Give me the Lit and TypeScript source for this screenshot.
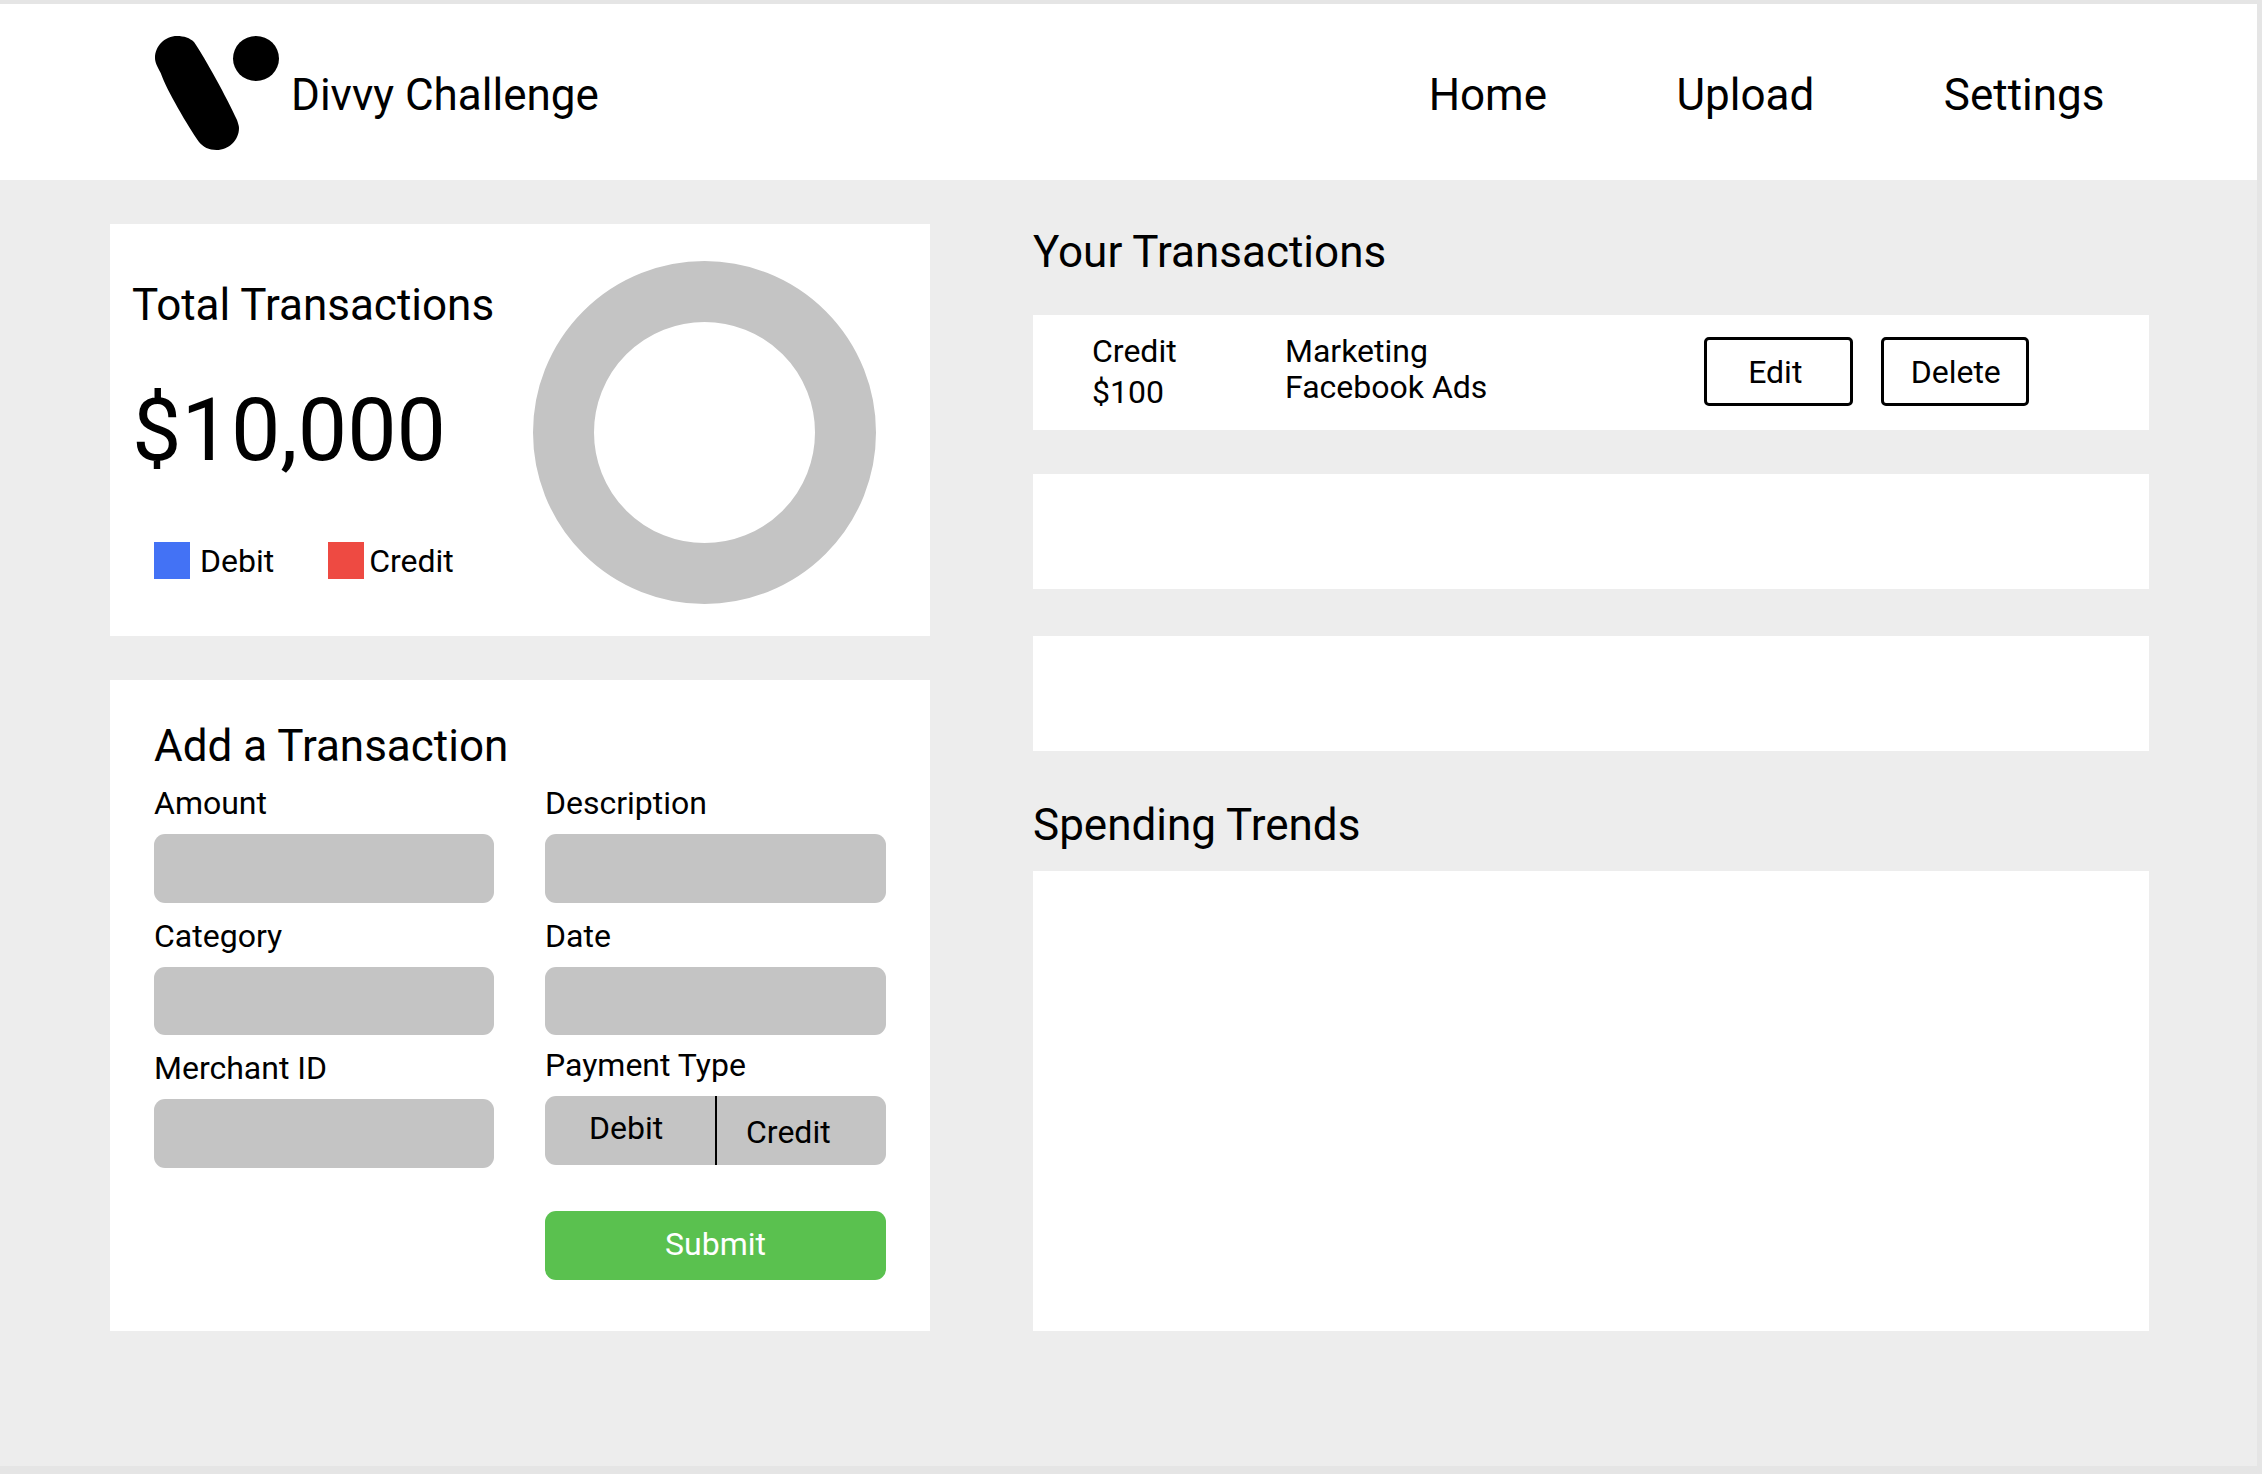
import { css, html, LitElement } from "lit";
import { customElement } from "lit/decorators.js";

@customElement("app-root")
export class AppRoot extends LitElement {
  static styles = css`
    :host {
      display: block;
      width: 2262px;
      height: 1474px;
      background: #e5e5e5;
      font-family: Roboto, "Liberation Sans", sans-serif;
      color: #000;
      overflow: hidden;
    }

    .frame {
      width: 2257px;
      height: 1462px;
      margin-top: 4px;
      background: #ededed;
    }

    /* header */
    .header {
      height: 176px;
      background: #fff;
      display: flex;
      align-items: flex-start;
      box-sizing: border-box;
      padding-left: 155px;
    }
    .logo {
      display: block;
      width: 124px;
      height: 114px;
      margin-top: 32px;
    }
    .brand {
      font-size: 44px;
      line-height: 54px;
      margin: 64px 0 0 12px;
    }
    .nav {
      display: flex;
      gap: 129.5px;
      margin: 64px 0 0 auto;
      padding-right: 152.5px;
      font-size: 44px;
      line-height: 54px;
    }

    /* main */
    .main {
      display: grid;
      grid-template-columns: 820px 1116px;
      column-gap: 103px;
      padding: 44px 0 0 110px;
    }
    .left {
      display: flex;
      flex-direction: column;
      gap: 44px;
    }
    .card {
      background: #fff;
      box-sizing: border-box;
    }
    h2 {
      margin: 0;
      font-weight: 400;
      font-size: 44px;
      line-height: 54px;
    }

    /* total card */
    .total {
      height: 412px;
      display: flex;
      padding: 0 0 0 22px;
    }
    .total-text {
      width: 401px;
      padding-top: 54px;
    }
    .amount {
      font-size: 88px;
      line-height: 102px;
      margin-top: 47px;
    }
    .legend {
      display: flex;
      margin: 61px 0 0 22px;
      font-size: 32px;
      line-height: 39px;
    }
    .legend span {
      display: flex;
    }
    .swatch {
      width: 36px;
      height: 37px;
    }
    .debit-label {
      margin: 0 54px 0 10px;
    }
    .credit-label {
      margin-left: 5px;
    }
    .donut {
      width: 343px;
      height: 343px;
      margin-top: 37px;
      box-sizing: border-box;
      border: 61px solid #c4c4c4;
      border-radius: 50%;
    }

    /* form card */
    .form {
      height: 651px;
      padding: 39px 0 0 44px;
    }
    .form-cols {
      display: grid;
      grid-template-columns: 340px 341px;
      column-gap: 51px;
      margin-top: 10px;
    }
    .col {
      display: flex;
      flex-direction: column;
    }
    .label {
      font-size: 32px;
      line-height: 40px;
      margin-bottom: 11px;
    }
    .input {
      height: 68.5px;
      background: #c4c4c4;
      border-radius: 11px;
      margin-bottom: 13px;
    }
    .label.tight {
      margin-top: -3px;
    }
    .segment {
      height: 68.5px;
      display: grid;
      grid-template-columns: 172px 1fr;
      background: #c4c4c4;
      border-radius: 11px;
      font-size: 32px;
      line-height: 37px;
    }
    .seg-debit {
      padding: 14px 0 0 44px;
      border-right: 2px solid #000;
    }
    .seg-credit {
      padding: 17.5px 0 0 29px;
    }
    .submit {
      height: 68.5px;
      margin-top: 46.5px;
      background: #5ac14f;
      border-radius: 11px;
      color: #fff;
      font-size: 32px;
      line-height: 66px;
      text-align: center;
    }

    /* right column */
    .right h2:first-child {
      padding-top: 1px;
    }
    .rows {
      display: flex;
      flex-direction: column;
      margin-top: 36px;
    }
    .row {
      height: 115px;
      background: #fff;
      display: flex;
      align-items: flex-start;
      padding-left: 59px;
      box-sizing: border-box;
      font-size: 32px;
    }
    .row + .row {
      margin-top: 44px;
    }
    .row + .row + .row {
      margin-top: 47px;
    }
    .row-type {
      width: 193px;
      line-height: 41px;
      padding-top: 15.5px;
    }
    .row-desc {
      width: 419px;
      line-height: 36px;
      padding-top: 18px;
    }
    .actions {
      display: flex;
      gap: 28px;
      margin-top: 22px;
    }
    .btn {
      width: 148.5px;
      height: 69px;
      box-sizing: border-box;
      border: 3px solid #000;
      border-radius: 5px;
      text-align: center;
      line-height: 65px;
    }
    .btn.edit {
      padding-right: 6px;
    }
    .btn.delete {
      padding-left: 2px;
    }
    .trends-title {
      margin-top: 47px;
    }
    .chart {
      height: 460px;
      margin-top: 19px;
      background: #fff;
    }
  `;

  render() {
    return html`
      <div class="frame">
        <header class="header">
          <svg class="logo" viewBox="0 0 124 114">
            <path d="M22 0C29 0 35 2 39 6C50 22 72 62 82 84C83 87 84 90 84 92C84 104 74 114 61.5 114C54 114 48 111 44 106C33 90 12 55 5.7 37C2 30 0 26 0 22C0 10 10 0 22 0Z"></path>
            <ellipse cx="101" cy="22.5" rx="23" ry="22.5"></ellipse>
          </svg>
          <div class="brand">Divvy Challenge</div>
          <nav class="nav">
            <span>Home</span>
            <span>Upload</span>
            <span>Settings</span>
          </nav>
        </header>
        <main class="main">
          <div class="left">
            <section class="card total">
              <div class="total-text">
                <h2>Total Transactions</h2>
                <div class="amount">$10,000</div>
                <div class="legend">
                  <span class="swatch" style="background:#4372f5"></span>
                  <span class="debit-label">Debit</span>
                  <span class="swatch" style="background:#ee4a42"></span>
                  <span class="credit-label">Credit</span>
                </div>
              </div>
              <div class="donut"></div>
            </section>
            <section class="card form">
              <h2>Add a Transaction</h2>
              <div class="form-cols">
                <div class="col">
                  <div class="label">Amount</div>
                  <div class="input"></div>
                  <div class="label">Category</div>
                  <div class="input"></div>
                  <div class="label">Merchant ID</div>
                  <div class="input"></div>
                </div>
                <div class="col">
                  <div class="label">Description</div>
                  <div class="input"></div>
                  <div class="label">Date</div>
                  <div class="input"></div>
                  <div class="label tight">Payment Type</div>
                  <div class="segment">
                    <div class="seg-debit">Debit</div>
                    <div class="seg-credit">Credit</div>
                  </div>
                  <div class="submit">Submit</div>
                </div>
              </div>
            </section>
          </div>
          <div class="right">
            <h2>Your Transactions</h2>
            <div class="rows">
              <div class="row">
                <div class="row-type">Credit<br />$100</div>
                <div class="row-desc">Marketing<br />Facebook Ads</div>
                <div class="actions">
                  <div class="btn edit">Edit</div>
                  <div class="btn delete">Delete</div>
                </div>
              </div>
              <div class="row"></div>
              <div class="row"></div>
            </div>
            <h2 class="trends-title">Spending Trends</h2>
            <div class="chart"></div>
          </div>
        </main>
      </div>
    `;
  }
}
